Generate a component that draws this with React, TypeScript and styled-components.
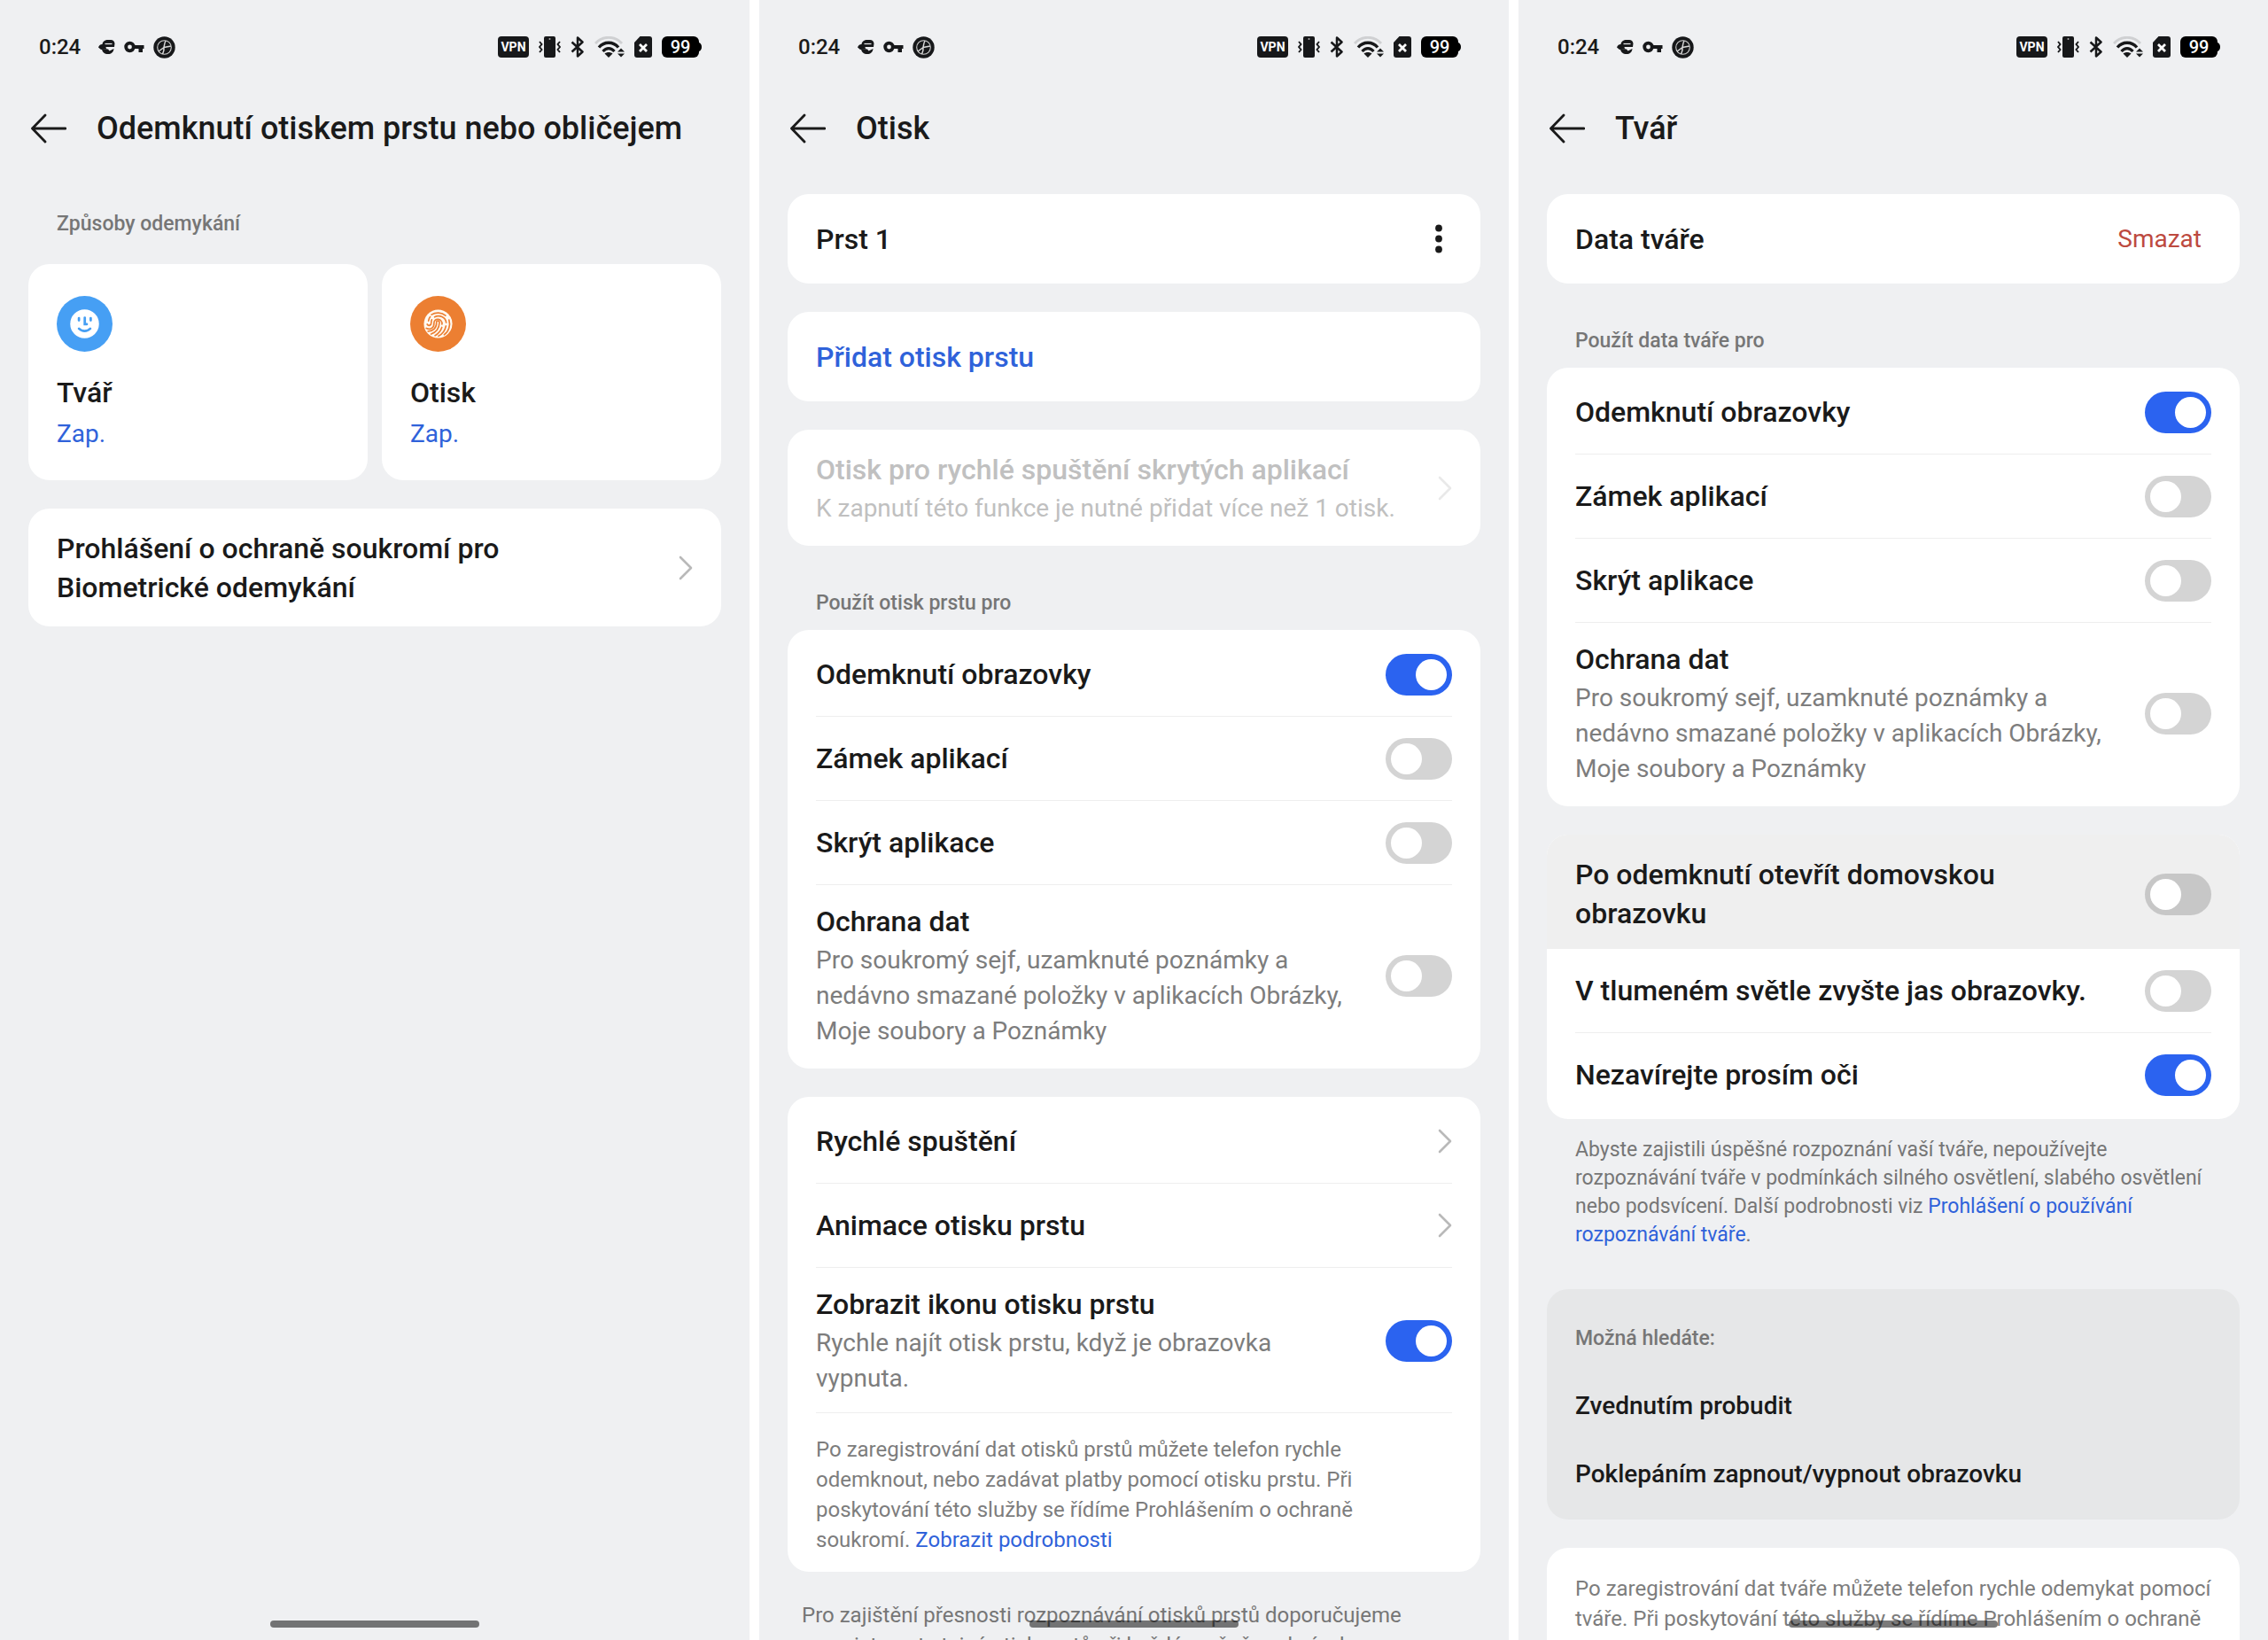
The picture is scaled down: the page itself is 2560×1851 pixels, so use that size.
import React, { useId, useState } from "react";
import styled, { createGlobalStyle, css } from "styled-components";

const color = {
  page: "#ffffff",
  panel: "#eff0f2",
  card: "#ffffff",
  pressed: "#efefef",
  suggest: "#e6e7e8",
  text: "#1a1a1a",
  muted: "#7d7d7d",
  caption: "#767676",
  disabled: "#c0c0c0",
  line: "#eeeeee",
  accent: "#2f62da",
  switchOn: "#2b63f0",
  switchOff: "#d4d4d4",
  danger: "#bd4a3f",
};

const GlobalStyle = createGlobalStyle`
  * { box-sizing: border-box; }
  body { margin: 0; background: ${color.page}; }
  body, button, input { font-family: Roboto, "Noto Sans", sans-serif; }
  button { margin: 0; padding: 0; border: 0; background: none; color: inherit; text-align: left; cursor: pointer; }
  a { color: ${color.accent}; text-decoration: none; }
  h1, h2, p { margin: 0; font-weight: inherit; }
`;

const Screens = styled.div`
  display: grid;
  grid-template-columns: repeat(3, minmax(0, 1fr));
  gap: 11px;
  height: 100vh;
`;

const Screen = styled.section`
  position: relative;
  display: flex;
  flex-direction: column;
  overflow: hidden;
  background: ${color.panel};
  color: ${color.text};
`;

const HomeBar = styled.div`
  position: absolute;
  left: 50%;
  bottom: 14px;
  width: 236px;
  height: 8px;
  margin-left: -118px;
  border-radius: 4px;
  background: rgba(0, 0, 0, 0.52);
`;

const StatusRow = styled.div`
  flex: none;
  display: flex;
  align-items: center;
  justify-content: space-between;
  height: 106px;
  padding: 0 54px 0 44px;
`;

const StatusGroup = styled.div<{ $gap: number }>`
  display: flex;
  align-items: center;
  gap: ${(p) => p.$gap}px;
`;

const Clock = styled.span`
  margin-right: 10px;
  font-size: 24px;
  font-weight: 500;
`;

const VpnBadge = styled.span`
  width: 35px;
  border-radius: 4px;
  background: #17181a;
  color: #fff;
  font-size: 14px;
  line-height: 24px;
  font-weight: 700;
  text-align: center;
`;

const Battery = styled.span`
  width: 42px;
  border-radius: 6px;
  background: #000;
  color: #fff;
  font-size: 20px;
  line-height: 24px;
  font-weight: 500;
  text-align: center;
`;

const Header = styled.header`
  flex: none;
  display: flex;
  align-items: center;
  gap: 34px;
  height: 77px;
  padding: 0 34px;
`;

const IconButton = styled.button`
  flex: none;
  display: flex;
  align-items: center;
`;

const ScreenTitle = styled.h1`
  font-size: 36px;
  line-height: 48px;
  font-weight: 500;
`;

const Content = styled.main<{ $labelFirst?: boolean }>`
  display: flex;
  flex-direction: column;
  gap: 32px;
  padding: ${(p) => (p.$labelFirst ? 54 : 36)}px 32px 0;
`;

const Group = styled.div<{ $gap?: number; $spaced?: boolean }>`
  display: flex;
  flex-direction: column;
  gap: ${(p) => p.$gap ?? 14}px;
  margin-top: ${(p) => (p.$spaced ? 17 : 0)}px;
`;

const GroupLabel = styled.h2`
  padding: 0 32px;
  font-size: 23px;
  line-height: 32px;
  font-weight: 500;
  color: ${color.caption};
`;

const Card = styled.div`
  display: flex;
  flex-direction: column;
  overflow: hidden;
  border-radius: 24px;
  background: ${color.card};
`;

const rowBox = css<{ $tall?: boolean; $pressed?: boolean }>`
  display: flex;
  align-items: center;
  justify-content: space-between;
  gap: 40px;
  width: 100%;
  min-height: 94px;
  padding: ${(p) => (p.$tall ? "19px 32px 18px" : "0 32px")};
  background: ${(p) => (p.$pressed ? color.pressed : "transparent")};
  color: ${color.text};

  &:first-child {
    min-height: 97px;
    padding-top: ${(p) => (p.$tall ? 23 : 3)}px;
  }
  &:last-child {
    min-height: 97px;
    padding-bottom: ${(p) => (p.$tall ? 22 : 3)}px;
  }
  &:only-child {
    min-height: 101px;
  }
`;

const PlainRow = styled.div<{ $tall?: boolean; $pressed?: boolean }>`
  ${rowBox}
`;

const LabelRow = styled.label<{ $tall?: boolean; $pressed?: boolean }>`
  ${rowBox}
  cursor: pointer;
`;

const ButtonRow = styled.button<{ $tall?: boolean; $pressed?: boolean }>`
  ${rowBox}
`;

const Divider = styled.hr`
  flex: none;
  width: auto;
  height: 1px;
  margin: 0 32px;
  border: 0;
  background: ${color.line};
`;

const RowText = styled.span`
  display: flex;
  flex-direction: column;
  gap: 2px;
`;

const RowTitle = styled.span<{ $tone?: string }>`
  font-size: 32px;
  line-height: 44px;
  font-weight: 500;
  color: ${(p) => p.$tone ?? color.text};
`;

const RowDetail = styled.span<{ $tone?: string }>`
  font-size: 28px;
  line-height: 40px;
  color: ${(p) => p.$tone ?? color.muted};
`;

const DeleteButton = styled.button`
  padding: 0 11px;
  font-size: 28px;
  line-height: 44px;
  color: ${color.danger};
`;

const Switch = styled.input<{ $pressed?: boolean }>`
  appearance: none;
  flex: none;
  display: flex;
  align-items: center;
  width: 75px;
  height: 47px;
  margin: 0;
  padding: 0 6px;
  border-radius: 24px;
  background: ${(p) => (p.$pressed ? "#c7c7c7" : color.switchOff)};
  cursor: pointer;

  &::before {
    content: "";
    width: 35px;
    height: 35px;
    border-radius: 50%;
    background: #fff;
  }
  &:checked {
    justify-content: flex-end;
    background: ${color.switchOn};
  }
`;

const Note = styled.p`
  padding: 24px 96px 16px 32px;
  font-size: 24px;
  line-height: 34px;
  color: ${color.muted};

  &:last-child {
    padding-bottom: 19px;
  }
  &:only-child {
    padding: 29px 32px 19px;
  }
`;

const Footnote = styled.p<{ $small?: boolean }>`
  padding: 0 ${(p) => (p.$small ? 32 : 16)}px;
  font-size: ${(p) => (p.$small ? 23 : 24)}px;
  line-height: ${(p) => (p.$small ? 32 : 34)}px;
  color: ${color.caption};
`;

const Tiles = styled.div`
  display: grid;
  grid-template-columns: 1fr 1fr;
  gap: 16px;
`;

const Tile = styled.a`
  display: flex;
  flex-direction: column;
  align-items: flex-start;
  padding: 36px 32px 30px;
  border-radius: 24px;
  background: ${color.card};
`;

const TileTitle = styled.span`
  margin-top: 24px;
  font-size: 32px;
  line-height: 44px;
  font-weight: 500;
  color: ${color.text};
`;

const TileState = styled.span`
  margin-top: 3px;
  font-size: 28px;
  line-height: 44px;
`;

const Suggestions = styled.nav`
  display: flex;
  flex-direction: column;
  margin-top: 13px;
  padding: 40px 0 13px;
  border-radius: 24px;
  background: ${color.suggest};
`;

const SuggestionLink = styled.a`
  padding: 16px 32px;
  font-size: 28px;
  line-height: 45px;
  font-weight: 500;
  color: ${color.text};

  h2 + & {
    margin-top: 21px;
  }
`;

const ink = "#17181a";

function BrowserIcon() {
  return (
    <svg width="19" height="18" viewBox="0 0 19 18" aria-hidden="true">
      <path d="M4.500 6C5 2.500 7.500 1 11 1h3c2.500 0 4 1.500 4.500 4l-.5 4H8.500c0 1.200.5 2 1.500 2.500l-7 .5L0 9.500C.5 7.500 2 6.200 4.500 6z" fill={ink} />
      <path d="M4 11.500h7l1.500 2 5-2.500c-.5 4-3 6-6.500 6-4 0-6.500-2-7-5.500z" fill={ink} />
      <path d="M7.500 5.500h8" stroke={color.panel} strokeWidth="1.200" />
    </svg>
  );
}

function KeyIcon() {
  return (
    <svg width="23" height="14" viewBox="0 0 23 14" aria-hidden="true">
      <circle cx="6.500" cy="7" r="4.300" fill="none" stroke={ink} strokeWidth="3.800" />
      <path d="M10 5h12.500v4H21v4h-4.500V9H10z" fill={ink} />
    </svg>
  );
}

function WheelIcon() {
  return (
    <svg width="25" height="25" viewBox="0 0 25 25" aria-hidden="true">
      <circle cx="12.500" cy="12.500" r="12.200" fill={ink} />
      <circle cx="12.500" cy="12.500" r="7.800" fill="none" stroke="#d0d0d0" strokeWidth="1.100" />
      <path d="M14 5c-1.500 3-1.500 5-2 7.500L6 17M12 12.500l8-1.500M12 12.500c.5 3 0 4-1.500 7.500" fill="none" stroke="#d8d8d8" strokeWidth="1.500" />
    </svg>
  );
}

function VibrateIcon() {
  return (
    <svg width="25" height="24" viewBox="0 0 25 24" aria-hidden="true">
      <rect x="6" y="0" width="13" height="24" rx="2" fill={ink} />
      <circle cx="12.500" cy="3" r="1" fill="#aaa" />
      <path d="M1 6l2.500 3L1 12l2.500 3L1 18M24 6l-2.500 3 2.500 3-2.500 3 2.500 3" fill="none" stroke={ink} strokeWidth="1.900" />
    </svg>
  );
}

function BluetoothIcon() {
  return (
    <svg width="16" height="24" viewBox="0 0 16 24" aria-hidden="true">
      <path d="M1.500 6.500l12 11L8 22.500v-21l5.500 5-12 11" fill="none" stroke={ink} strokeWidth="2.500" strokeLinejoin="round" />
    </svg>
  );
}

function WifiIcon() {
  return (
    <svg width="34" height="24" viewBox="0 0 34 24" aria-hidden="true">
      <path d="M1 8C9-1 23-1 31 8" fill="none" stroke="#cfd0d2" strokeWidth="2.800" />
      <path d="M5 12.500c6-7 16-7 22 0" fill="none" stroke={ink} strokeWidth="3.400" />
      <path d="M9.500 17c4-4.500 9-4.500 13 0" fill="none" stroke={ink} strokeWidth="3.200" />
      <path d="M11.500 19.500c2.500-2 6.500-2 9 0L16 24z" fill={ink} />
      <path d="M26 17.500l4-4 4 4zM26 19.500l4 4 4-4z" fill={ink} />
    </svg>
  );
}

function SimIcon() {
  return (
    <svg width="20" height="24" viewBox="0 0 20 24" aria-hidden="true">
      <path d="M6.500 0H17a3 3 0 013 3v18a3 3 0 01-3 3H3a3 3 0 01-3-3V7z" fill={ink} />
      <path d="M6 9l8 8M14 9l-8 8" stroke="#fff" strokeWidth="2.800" />
    </svg>
  );
}

function BatteryTip() {
  return (
    <svg width="3" height="10" viewBox="0 0 3 10" aria-hidden="true">
      <path d="M0 0c2 1 3 2.500 3 5s-1 4-3 5z" fill="#000" />
    </svg>
  );
}

function BackIcon() {
  return (
    <svg width="41" height="34" viewBox="0 0 41 34" aria-hidden="true">
      <path d="M17 2L2.500 17 17 32M2.500 17H40" fill="none" stroke={color.text} strokeWidth="2.800" strokeLinejoin="round" strokeLinecap="round" />
    </svg>
  );
}

const ChevronSvg = styled.svg`
  flex: none;
`;

function Chevron({ faint }: { faint?: boolean }) {
  return (
    <ChevronSvg width="16" height="28" viewBox="0 0 16 28" aria-hidden="true">
      <path d="M2 2l12 12L2 26" fill="none" stroke={faint ? "#e9e9e9" : "#b9b9b9"} strokeWidth="2.600" strokeLinecap="round" strokeLinejoin="round" />
    </ChevronSvg>
  );
}

function MoreIcon() {
  return (
    <svg width="30" height="36" viewBox="0 0 30 36" aria-hidden="true">
      <circle cx="15" cy="5.500" r="3.900" fill={color.text} />
      <circle cx="15" cy="17.500" r="3.900" fill={color.text} />
      <circle cx="15" cy="29.500" r="3.900" fill={color.text} />
    </svg>
  );
}

function FaceIcon() {
  return (
    <svg width="63" height="63" viewBox="0 0 64 64" aria-hidden="true">
      <circle cx="32" cy="32" r="32" fill="#469ff4" />
      <circle cx="32" cy="32" r="16.500" fill="#fff" />
      <g fill="none" stroke="#469ff4" strokeWidth="2.800" strokeLinecap="round">
        <path d="M25.500 25.500v2.500M39 25.500v2.500M32.200 25v7.500h2.300M25.500 37.500c3.500 3.600 9.500 3.600 13 0" />
      </g>
    </svg>
  );
}

function FingerprintIcon() {
  return (
    <svg width="63" height="63" viewBox="0 0 64 64" aria-hidden="true">
      <circle cx="32" cy="32" r="32" fill="#ec7f32" />
      <circle cx="32" cy="32" r="16.300" fill="#fffaf2" />
      <g fill="none" stroke="#ec7f32" strokeWidth="1.700" strokeLinecap="round">
        <path d="M24.500 21.500C29 18.500 36 18.500 40.500 22.500" />
        <path d="M19.500 32.500c1.300 2.300 4.800 1.500 4.700-2 0-1.200-.2-2 .5-3.300M28 24.200c5.500-3 12.500.300 13.300 6.300" />
        <path d="M18.500 37c5 2.300 9-.5 8.800-6 0-6 9.700-5.500 9.200 1.500" />
        <path d="M20.500 40.500c6-.2 10-4 9.700-10.200 0-2.500 3.400-2.300 3.300.4-.3 6.500-4 11-9.500 13" />
        <path d="M21 28.500c.3-2 1-3.500 2-4.600M44.500 27.500c2 6-.5 14-5.500 17M41 34.500c-1 5.500-4.500 9.500-8.500 11.500M36.300 36c-1.400 4.200-4 7.300-7.800 9.500" />
      </g>
    </svg>
  );
}

function StatusBar() {
  return (
    <StatusRow>
      <StatusGroup $gap={10}>
        <Clock>0:24</Clock>
        <BrowserIcon />
        <KeyIcon />
        <WheelIcon />
      </StatusGroup>
      <StatusGroup $gap={11}>
        <VpnBadge>VPN</VpnBadge>
        <VibrateIcon />
        <BluetoothIcon />
        <WifiIcon />
        <SimIcon />
        <StatusGroup $gap={0}>
          <Battery>99</Battery>
          <BatteryTip />
        </StatusGroup>
      </StatusGroup>
    </StatusRow>
  );
}

function Phone({ title, labelFirst, children }: { title: string; labelFirst?: boolean; children: React.ReactNode }) {
  return (
    <Screen>
      <StatusBar />
      <Header>
        <IconButton type="button" aria-label="Zpět">
          <BackIcon />
        </IconButton>
        <ScreenTitle>{title}</ScreenTitle>
      </Header>
      <Content $labelFirst={labelFirst}>{children}</Content>
      <HomeBar />
    </Screen>
  );
}

interface SwitchRowProps {
  title: string;
  detail?: string;
  on?: boolean;
  tall?: boolean;
  pressed?: boolean;
}

function SwitchRow({ title, detail, on = false, tall, pressed }: SwitchRowProps) {
  const id = useId();
  const [checked, setChecked] = useState(on);
  return (
    <LabelRow htmlFor={id} $tall={tall || Boolean(detail)} $pressed={pressed}>
      <RowText>
        <RowTitle>{title}</RowTitle>
        {detail && <RowDetail>{detail}</RowDetail>}
      </RowText>
      <Switch
        id={id}
        type="checkbox"
        role="switch"
        checked={checked}
        onChange={(e) => setChecked(e.target.checked)}
        $pressed={pressed}
      />
    </LabelRow>
  );
}

function UsageCard() {
  return (
    <Card>
      <SwitchRow title="Odemknutí obrazovky" on />
      <Divider />
      <SwitchRow title="Zámek aplikací" />
      <Divider />
      <SwitchRow title="Skrýt aplikace" />
      <Divider />
      <SwitchRow
        title="Ochrana dat"
        detail="Pro soukromý sejf, uzamknuté poznámky a nedávno smazané položky v aplikacích Obrázky, Moje soubory a Poznámky"
      />
    </Card>
  );
}

function UnlockMethods() {
  return (
    <Phone title="Odemknutí otiskem prstu nebo obličejem" labelFirst>
      <Group $gap={29}>
        <GroupLabel>Způsoby odemykání</GroupLabel>
        <Tiles>
          <Tile href="#tvar">
            <FaceIcon />
            <TileTitle>Tvář</TileTitle>
            <TileState>Zap.</TileState>
          </Tile>
          <Tile href="#otisk">
            <FingerprintIcon />
            <TileTitle>Otisk</TileTitle>
            <TileState>Zap.</TileState>
          </Tile>
        </Tiles>
      </Group>
      <Card>
        <ButtonRow type="button" $tall>
          <RowTitle>Prohlášení o ochraně soukromí pro Biometrické odemykání</RowTitle>
          <Chevron />
        </ButtonRow>
      </Card>
    </Phone>
  );
}

function FingerprintSettings() {
  return (
    <Phone title="Otisk">
      <Card>
        <PlainRow>
          <RowTitle>Prst 1</RowTitle>
          <IconButton type="button" aria-label="Další možnosti">
            <MoreIcon />
          </IconButton>
        </PlainRow>
      </Card>
      <Card>
        <ButtonRow type="button">
          <RowTitle $tone={color.accent}>Přidat otisk prstu</RowTitle>
        </ButtonRow>
      </Card>
      <Card>
        <ButtonRow type="button" disabled $tall>
          <RowText>
            <RowTitle $tone={color.disabled}>Otisk pro rychlé spuštění skrytých aplikací</RowTitle>
            <RowDetail $tone={color.disabled}>K zapnutí této funkce je nutné přidat více než 1 otisk.</RowDetail>
          </RowText>
          <Chevron faint />
        </ButtonRow>
      </Card>
      <Group $spaced>
        <GroupLabel>Použít otisk prstu pro</GroupLabel>
        <UsageCard />
      </Group>
      <Card>
        <ButtonRow type="button">
          <RowTitle>Rychlé spuštění</RowTitle>
          <Chevron />
        </ButtonRow>
        <Divider />
        <ButtonRow type="button">
          <RowTitle>Animace otisku prstu</RowTitle>
          <Chevron />
        </ButtonRow>
        <Divider />
        <SwitchRow title="Zobrazit ikonu otisku prstu" detail="Rychle najít otisk prstu, když je obrazovka vypnuta." on />
        <Divider />
        <Note>
          Po zaregistrování dat otisků prstů můžete telefon rychle odemknout, nebo zadávat platby pomocí otisku prstu. Při
          poskytování této služby se řídíme Prohlášením o ochraně soukromí. <a href="#podrobnosti">Zobrazit podrobnosti</a>
        </Note>
      </Card>
      <Footnote>
        Pro zajištění přesnosti rozpoznávání otisků prstů doporučujeme zaregistrovat stejný otisk prstů při každé změně
        podmínek.
      </Footnote>
    </Phone>
  );
}

function FaceSettings() {
  return (
    <Phone title="Tvář">
      <Card>
        <PlainRow>
          <RowTitle>Data tváře</RowTitle>
          <DeleteButton type="button">Smazat</DeleteButton>
        </PlainRow>
      </Card>
      <Group $spaced>
        <GroupLabel>Použít data tváře pro</GroupLabel>
        <UsageCard />
      </Group>
      <Group $gap={19}>
        <Card>
          <SwitchRow title="Po odemknutí otevřít domovskou obrazovku" tall pressed />
          <SwitchRow title="V tlumeném světle zvyšte jas obrazovky." />
          <Divider />
          <SwitchRow title="Nezavírejte prosím oči" on />
        </Card>
        <Footnote $small>
          Abyste zajistili úspěšné rozpoznání vaší tváře, nepoužívejte rozpoznávání tváře v podmínkách silného osvětlení,
          slabého osvětlení nebo podsvícení. Další podrobnosti viz <a href="#prohlaseni">Prohlášení o používání rozpoznávání tváře</a>.
        </Footnote>
      </Group>
      <Suggestions>
        <GroupLabel>Možná hledáte:</GroupLabel>
        <SuggestionLink href="#zvednutim">Zvednutím probudit</SuggestionLink>
        <SuggestionLink href="#poklepanim">Poklepáním zapnout/vypnout obrazovku</SuggestionLink>
      </Suggestions>
      <Card>
        <Note>
          Po zaregistrování dat tváře můžete telefon rychle odemykat pomocí tváře. Při poskytování této služby se řídíme
          Prohlášením o ochraně soukromí. <a href="#podrobnosti-tvar">Zobrazit podrobnosti</a>
        </Note>
      </Card>
    </Phone>
  );
}

export default function App() {
  return (
    <>
      <GlobalStyle />
      <Screens>
        <UnlockMethods />
        <FingerprintSettings />
        <FaceSettings />
      </Screens>
    </>
  );
}
